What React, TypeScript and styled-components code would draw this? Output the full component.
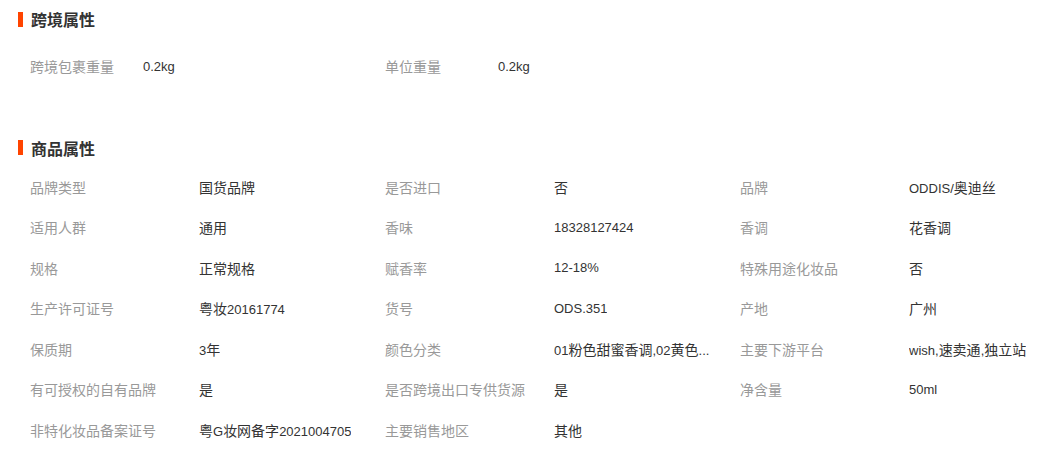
import React from "react";
import styled, { createGlobalStyle } from "styled-components";

const Global = createGlobalStyle`
  html, body { margin: 0; padding: 0; background: #fff; }
  body { font-family: "Liberation Sans", "Noto Sans CJK SC", sans-serif; }
`;

const Page = styled.div`
  padding: 0 18px;
  width: 1059px;
  box-sizing: border-box;
`;

const Section = styled.section<{ $gap: number }>`
  margin-bottom: ${(p) => p.$gap}px;
`;

const Title = styled.h2`
  display: flex;
  align-items: center;
  height: 38px;
  margin: 0;
  font-size: 16px;
  font-weight: bold;
  color: #333;
  font-family: "Noto Sans CJK SC", sans-serif;
  &::before {
    content: "";
    display: block;
    width: 5px;
    height: 15px;
    background: #ff4400;
    margin-right: 8px;
  }
`;

const Grid = styled.div<{ $top: number }>`
  display: grid;
  grid-template-columns: repeat(3, 355px);
  grid-auto-rows: 40.5px;
  padding-left: 12px;
  margin-top: ${(p) => p.$top}px;
`;

const Cell = styled.div`
  display: flex;
  align-items: center;
  font-size: 14px;
  white-space: nowrap;
`;

const Label = styled.span<{ $w: number }>`
  width: ${(p) => p.$w}px;
  flex: none;
  color: #999;
  font-family: "Noto Sans CJK SC", sans-serif;
`;

const Value = styled.span`
  color: #333;
  max-width: 170px;
  overflow: hidden;
  text-overflow: ellipsis;
  font-family: "Liberation Sans", "Noto Sans CJK SC", sans-serif;
  font-size: 13px;
  & > i {
    font-style: normal;
    font-size: 14px;
    font-family: "Noto Sans CJK SC", sans-serif;
  }
`;

type Item = [string, string];

const cross: Item[] = [
  ["跨境包裹重量", "0.2kg"],
  ["单位重量", "0.2kg"],
];

const goods: Item[] = [
  ["品牌类型", "国货品牌"],
  ["是否进口", "否"],
  ["品牌", "ODDIS/奥迪丝"],
  ["适用人群", "通用"],
  ["香味", "18328127424"],
  ["香调", "花香调"],
  ["规格", "正常规格"],
  ["赋香率", "12-18%"],
  ["特殊用途化妆品", "否"],
  ["生产许可证号", "粤妆20161774"],
  ["货号", "ODS.351"],
  ["产地", "广州"],
  ["保质期", "3年"],
  ["颜色分类", "01粉色甜蜜香调,02黄色..."],
  ["主要下游平台", "wish,速卖通,独立站"],
  ["有可授权的自有品牌", "是"],
  ["是否跨境出口专供货源", "是"],
  ["净含量", "50ml"],
  ["非特化妆品备案证号", "粤G妆网备字2021004705"],
  ["主要销售地区", "其他"],
];

// split value so CJK runs render at 14px, latin at 13px
const renderValue = (v: string) => {
  const parts = v.match(/[\u3400-\u9fff\u3000-\u303f]+|[^\u3400-\u9fff\u3000-\u303f]+/g) || [];
  return parts.map((p, i) =>
    /[\u3400-\u9fff]/.test(p) ? <i key={i}>{p}</i> : <React.Fragment key={i}>{p}</React.Fragment>
  );
};

const Props = ({ items, labelWidth, top }: { items: Item[]; labelWidth: number; top: number }) => (
  <Grid $top={top}>
    {items.map(([k, v]) => (
      <Cell key={k}>
        <Label $w={labelWidth}>{k}</Label>
        <Value>{renderValue(v)}</Value>
      </Cell>
    ))}
  </Grid>
);

export default function App() {
  return (
    <Page>
      <Global />
      <Section $gap={42}>
        <Title>跨境属性</Title>
        <Props items={cross} labelWidth={113} top={8} />
      </Section>
      <Section $gap={0}>
        <Title>商品属性</Title>
        <Props items={goods} labelWidth={169} top={0} />
      </Section>
    </Page>
  );
}
